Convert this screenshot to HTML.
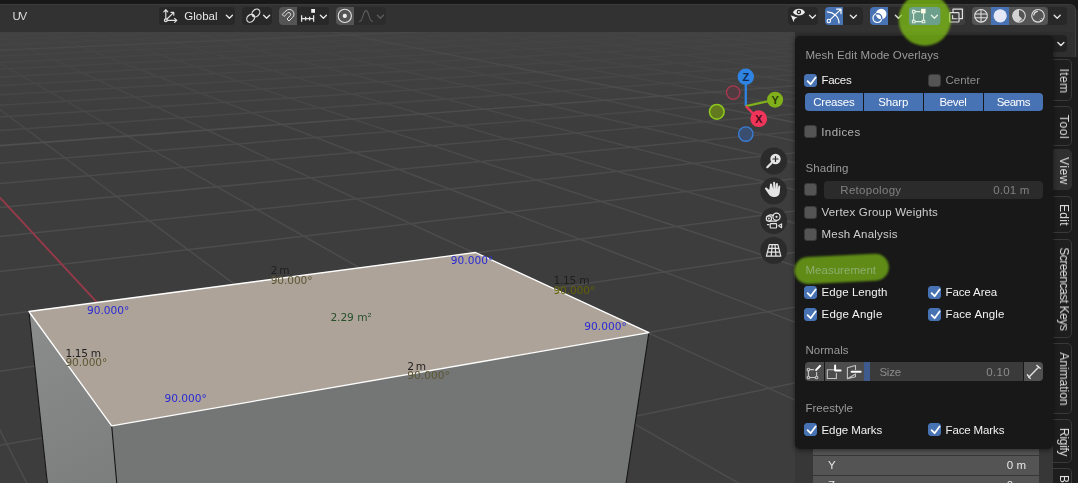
<!DOCTYPE html>
<html><head><meta charset="utf-8"><title>Blender - Mesh Edit Mode Overlays</title>
<style>
*{box-sizing:border-box;margin:0;padding:0}
html,body{width:1078px;height:483px;overflow:hidden;background:#3d3d3d;font-family:"Liberation Sans","DejaVu Sans",sans-serif;font-size:11.5px;color:#e6e6e6}
#root{position:relative;width:1078px;height:483px;overflow:hidden;background:#3d3d3d}
.abs{position:absolute}
#vp{position:absolute;left:0;top:0;width:1078px;height:483px}
#topstrip{position:absolute;left:0;top:0;width:1078px;height:12px;background:#181818}
#header{position:absolute;left:0;top:3.6px;width:1076px;height:28.4px;background:#323232;border-radius:0 6px 0 0;border-top:1px solid #3c3c3c;border-right:1px solid #404040}
.hbtn{position:absolute;top:7px;height:18px;background:#282828;border-radius:4px}
.hbtn.l{background:#545454}
.hbtn.b{background:#4772b3}
.t{position:absolute;white-space:nowrap;line-height:14px;will-change:opacity}
.lab{color:#9a9a9a}
.dim{color:#8c8c8c}
#popup{z-index:3;position:absolute;left:795px;top:36px;width:258px;height:413px;background:#181818;border-radius:5px;box-shadow:0 1px 5px rgba(0,0,0,.55)}
.cb{position:absolute;width:13px;height:13px;border-radius:3px;background:#545454;border:1px solid #3a3a3a}
.cb.on{background:#4772b3;border-color:#4772b3}
.cb.on svg{position:absolute;left:0;top:0}
.seg{position:absolute;background:#4772b3}
.meas{font-family:"DejaVu Sans","Liberation Sans",sans-serif;font-size:10.6px;line-height:11px}
#side{position:absolute;left:1053px;top:32px;width:25px;height:451px;background:#1c1c1c}
.tab{position:absolute;left:0;width:19px;background:#1e1e1e;border-radius:0 5px 5px 0;border:1px solid #393939;border-left:none}
.tab span{position:absolute;left:10.5px;top:50%;white-space:nowrap;transform:translate(-50%,-50%) rotate(90deg);color:#dedede;font-size:12px;line-height:14px;will-change:opacity}
.tab.act{background:#303030;border-color:#303030}
.nav{position:absolute;left:761px;width:26px;height:26px;border-radius:13px;background:#2e2e2e}
</style></head><body><div id="root">
<svg id="vp" width="1078" height="483" viewBox="0 0 1078 483">
<defs><linearGradient id="haze" x1="0" y1="32" x2="0" y2="132" gradientUnits="userSpaceOnUse"><stop offset="0" stop-color="#424242"/><stop offset="1" stop-color="#3d3d3d"/></linearGradient><linearGradient id="gf" x1="0" y1="0" x2="0" y2="483" gradientUnits="userSpaceOnUse"><stop offset="0.066" stop-color="#fff" stop-opacity=".16"/><stop offset="0.16" stop-color="#fff" stop-opacity=".5"/><stop offset="0.30" stop-color="#fff" stop-opacity=".85"/><stop offset="0.5" stop-color="#fff" stop-opacity="1"/></linearGradient>
<linearGradient id="gf2" x1="0" y1="0" x2="0" y2="483" gradientUnits="userSpaceOnUse"><stop offset="0.066" stop-color="#fff" stop-opacity=".45"/><stop offset="0.3" stop-color="#fff" stop-opacity="1"/></linearGradient>
<mask id="gm" maskUnits="userSpaceOnUse" x="0" y="0" width="1078" height="483"><rect x="0" y="0" width="1078" height="483" fill="url(#gf)"/></mask>
<mask id="gm2" maskUnits="userSpaceOnUse" x="0" y="0" width="1078" height="483"><rect x="0" y="0" width="1078" height="483" fill="url(#gf2)"/></mask></defs>
<rect x="0" y="32" width="1078" height="100" fill="url(#haze)"/>
<g mask="url(#gm)">
<path d="M-472.6 -33.7 L-11881.4 2744.0" stroke="#4d4d4d" stroke-width="1.5" fill="none"/>
<path d="M-449.8 -34.1 L-11129.3 2863.0" stroke="#4d4d4d" stroke-width="1.5" fill="none"/>
<path d="M-405.1 -34.7 L-9419.6 3133.5" stroke="#4d4d4d" stroke-width="1.5" fill="none"/>
<path d="M-383.1 -35.0 L-8442.4 3288.1" stroke="#4d4d4d" stroke-width="1.5" fill="none"/>
<path d="M-361.5 -35.3 L-7367.5 3458.2" stroke="#4d4d4d" stroke-width="1.5" fill="none"/>
<path d="M-340.1 -35.6 L-6179.2 3646.3" stroke="#4d4d4d" stroke-width="1.5" fill="none"/>
<path d="M-319.0 -35.9 L-4858.6 3855.2" stroke="#4d4d4d" stroke-width="1.5" fill="none"/>
<path d="M-298.2 -36.2 L-2225.3 2541.2" stroke="#4d4d4d" stroke-width="1.5" fill="none"/>
<path d="M-277.6 -36.4 L-1159.3 2643.3" stroke="#4d4d4d" stroke-width="1.5" fill="none"/>
<path d="M-257.2 -36.7 L-8.0 2753.5" stroke="#4d4d4d" stroke-width="1.5" fill="none"/>
<path d="M-237.2 -37.0 L1239.4 2872.9" stroke="#4d4d4d" stroke-width="1.5" fill="none"/>
<path d="M-197.7 -37.6 L4074.8 3144.3" stroke="#4d4d4d" stroke-width="1.5" fill="none"/>
<path d="M-178.3 -37.8 L3771.9 2206.6" stroke="#4d4d4d" stroke-width="1.5" fill="none"/>
<path d="M-159.2 -38.1 L3605.5 1691.2" stroke="#4d4d4d" stroke-width="1.5" fill="none"/>
<path d="M-140.3 -38.4 L3500.2 1365.2" stroke="#4d4d4d" stroke-width="1.5" fill="none"/>
<path d="M-121.6 -38.6 L3427.6 1140.5" stroke="#4d4d4d" stroke-width="1.5" fill="none"/>
<path d="M-103.1 -38.9 L3374.5 976.1" stroke="#4d4d4d" stroke-width="1.5" fill="none"/>
<path d="M-84.9 -39.1 L3334.0 850.7" stroke="#4d4d4d" stroke-width="1.5" fill="none"/>
<path d="M-66.8 -39.4 L3302.1 751.9" stroke="#4d4d4d" stroke-width="1.5" fill="none"/>
<path d="M-49.0 -39.6 L3276.3 672.0" stroke="#4d4d4d" stroke-width="1.5" fill="none"/>
<path d="M-13.9 -40.1 L3237.1 550.7" stroke="#4d4d4d" stroke-width="1.5" fill="none"/>
<path d="M3.3 -40.4 L3221.9 503.6" stroke="#4d4d4d" stroke-width="1.5" fill="none"/>
<path d="M20.3 -40.6 L3208.8 463.0" stroke="#4d4d4d" stroke-width="1.5" fill="none"/>
<path d="M37.2 -40.8 L3197.3 427.7" stroke="#4d4d4d" stroke-width="1.5" fill="none"/>
<path d="M53.9 -41.1 L3187.3 396.7" stroke="#4d4d4d" stroke-width="1.5" fill="none"/>
<path d="M70.3 -41.3 L3178.5 369.2" stroke="#4d4d4d" stroke-width="1.5" fill="none"/>
<path d="M86.6 -41.5 L3170.5 344.7" stroke="#4d4d4d" stroke-width="1.5" fill="none"/>
<path d="M102.8 -41.7 L3163.4 322.7" stroke="#4d4d4d" stroke-width="1.5" fill="none"/>
<path d="M118.7 -42.0 L3157.0 302.9" stroke="#4d4d4d" stroke-width="1.5" fill="none"/>
<path d="M150.1 -42.4 L3145.9 268.6" stroke="#4d4d4d" stroke-width="1.5" fill="none"/>
<path d="M165.5 -42.6 L3141.1 253.6" stroke="#4d4d4d" stroke-width="1.5" fill="none"/>
<path d="M180.8 -42.8 L3136.7 239.8" stroke="#4d4d4d" stroke-width="1.5" fill="none"/>
<path d="M195.9 -43.0 L3132.6 227.2" stroke="#4d4d4d" stroke-width="1.5" fill="none"/>
<path d="M210.8 -43.2 L3128.8 215.5" stroke="#4d4d4d" stroke-width="1.5" fill="none"/>
<path d="M225.6 -43.4 L3125.3 204.6" stroke="#4d4d4d" stroke-width="1.5" fill="none"/>
<path d="M240.2 -43.6 L3122.0 194.5" stroke="#4d4d4d" stroke-width="1.5" fill="none"/>
<path d="M254.7 -43.8 L3119.0 185.1" stroke="#4d4d4d" stroke-width="1.5" fill="none"/>
<path d="M269.1 -44.0 L3116.2 176.3" stroke="#4d4d4d" stroke-width="1.5" fill="none"/>
<path d="M297.3 -44.4 L3111.0 160.4" stroke="#4d4d4d" stroke-width="1.5" fill="none"/>
<path d="M311.2 -44.6 L3108.7 153.1" stroke="#4d4d4d" stroke-width="1.5" fill="none"/>
<path d="M325.0 -44.8 L3106.4 146.3" stroke="#4d4d4d" stroke-width="1.5" fill="none"/>
<path d="M338.6 -45.0 L3104.4 139.8" stroke="#4d4d4d" stroke-width="1.5" fill="none"/>
<path d="M352.1 -45.2 L3102.4 133.7" stroke="#4d4d4d" stroke-width="1.5" fill="none"/>
<path d="M365.4 -45.4 L3100.5 127.9" stroke="#4d4d4d" stroke-width="1.5" fill="none"/>
<path d="M378.6 -45.6 L3098.8 122.5" stroke="#4d4d4d" stroke-width="1.5" fill="none"/>
<path d="M391.7 -45.7 L3097.1 117.3" stroke="#4d4d4d" stroke-width="1.5" fill="none"/>
<path d="M404.7 -45.9 L3095.5 112.3" stroke="#4d4d4d" stroke-width="1.5" fill="none"/>
<path d="M430.2 -46.3 L3092.5 103.2" stroke="#4d4d4d" stroke-width="1.5" fill="none"/>
<path d="M442.8 -46.5 L3091.1 98.9" stroke="#4d4d4d" stroke-width="1.5" fill="none"/>
<path d="M455.3 -46.6 L3089.8 94.8" stroke="#4d4d4d" stroke-width="1.5" fill="none"/>
<path d="M467.6 -46.8 L3088.6 90.9" stroke="#4d4d4d" stroke-width="1.5" fill="none"/>
<path d="M479.9 -47.0 L3087.4 87.2" stroke="#4d4d4d" stroke-width="1.5" fill="none"/>
<path d="M492.0 -47.1 L3086.2 83.6" stroke="#4d4d4d" stroke-width="1.5" fill="none"/>
<path d="M504.0 -47.3 L3085.1 80.2" stroke="#4d4d4d" stroke-width="1.5" fill="none"/>
<path d="M515.8 -47.5 L3084.0 76.9" stroke="#4d4d4d" stroke-width="1.5" fill="none"/>
<path d="M527.6 -47.6 L3083.0 73.7" stroke="#4d4d4d" stroke-width="1.5" fill="none"/>
<path d="M550.8 -48.0 L3081.1 67.8" stroke="#4d4d4d" stroke-width="1.5" fill="none"/>
<path d="M562.3 -48.1 L3080.2 64.9" stroke="#4d4d4d" stroke-width="1.5" fill="none"/>
<path d="M573.6 -48.3 L3079.3 62.2" stroke="#4d4d4d" stroke-width="1.5" fill="none"/>
<path d="M584.9 -48.4 L3078.5 59.6" stroke="#4d4d4d" stroke-width="1.5" fill="none"/>
<path d="M596.0 -48.6 L3077.7 57.1" stroke="#4d4d4d" stroke-width="1.5" fill="none"/>
<path d="M607.0 -48.7 L3076.9 54.7" stroke="#4d4d4d" stroke-width="1.5" fill="none"/>
<path d="M618.0 -48.9 L3076.1 52.3" stroke="#4d4d4d" stroke-width="1.5" fill="none"/>
<path d="M628.8 -49.0 L3075.4 50.1" stroke="#4d4d4d" stroke-width="1.5" fill="none"/>
<path d="M639.6 -49.2 L3074.7 47.9" stroke="#4d4d4d" stroke-width="1.5" fill="none"/>
<path d="M-472.6 -33.7 L644.9 -49.3" stroke="#4d4d4d" stroke-width="1.5" fill="none"/>
<path d="M-475.7 -33.0 L654.0 -48.9" stroke="#4d4d4d" stroke-width="1.5" fill="none"/>
<path d="M-478.9 -32.2 L663.2 -48.5" stroke="#4d4d4d" stroke-width="1.5" fill="none"/>
<path d="M-482.2 -31.4 L672.7 -48.2" stroke="#4d4d4d" stroke-width="1.5" fill="none"/>
<path d="M-485.6 -30.6 L682.3 -47.8" stroke="#4d4d4d" stroke-width="1.5" fill="none"/>
<path d="M-489.1 -29.7 L692.1 -47.4" stroke="#4d4d4d" stroke-width="1.5" fill="none"/>
<path d="M-492.8 -28.8 L702.2 -47.0" stroke="#4d4d4d" stroke-width="1.5" fill="none"/>
<path d="M-496.5 -27.9 L712.4 -46.6" stroke="#4d4d4d" stroke-width="1.5" fill="none"/>
<path d="M-500.4 -27.0 L722.9 -46.2" stroke="#4d4d4d" stroke-width="1.5" fill="none"/>
<path d="M-508.5 -25.0 L744.6 -45.3" stroke="#4d4d4d" stroke-width="1.5" fill="none"/>
<path d="M-512.8 -24.0 L755.8 -44.9" stroke="#4d4d4d" stroke-width="1.5" fill="none"/>
<path d="M-517.2 -22.9 L767.2 -44.4" stroke="#4d4d4d" stroke-width="1.5" fill="none"/>
<path d="M-521.8 -21.8 L778.9 -44.0" stroke="#4d4d4d" stroke-width="1.5" fill="none"/>
<path d="M-526.5 -20.6 L790.9 -43.5" stroke="#4d4d4d" stroke-width="1.5" fill="none"/>
<path d="M-531.5 -19.4 L803.1 -43.0" stroke="#4d4d4d" stroke-width="1.5" fill="none"/>
<path d="M-536.6 -18.2 L815.7 -42.5" stroke="#4d4d4d" stroke-width="1.5" fill="none"/>
<path d="M-541.9 -16.9 L828.5 -42.0" stroke="#4d4d4d" stroke-width="1.5" fill="none"/>
<path d="M-547.4 -15.5 L841.7 -41.5" stroke="#4d4d4d" stroke-width="1.5" fill="none"/>
<path d="M-559.2 -12.7 L868.9 -40.4" stroke="#4d4d4d" stroke-width="1.5" fill="none"/>
<path d="M-565.4 -11.1 L883.1 -39.8" stroke="#4d4d4d" stroke-width="1.5" fill="none"/>
<path d="M-571.9 -9.6 L897.6 -39.3" stroke="#4d4d4d" stroke-width="1.5" fill="none"/>
<path d="M-578.7 -7.9 L912.4 -38.7" stroke="#4d4d4d" stroke-width="1.5" fill="none"/>
<path d="M-585.8 -6.2 L927.7 -38.1" stroke="#4d4d4d" stroke-width="1.5" fill="none"/>
<path d="M-593.2 -4.4 L943.4 -37.5" stroke="#4d4d4d" stroke-width="1.5" fill="none"/>
<path d="M-600.9 -2.5 L959.4 -36.8" stroke="#4d4d4d" stroke-width="1.5" fill="none"/>
<path d="M-609.1 -0.5 L976.0 -36.2" stroke="#4d4d4d" stroke-width="1.5" fill="none"/>
<path d="M-617.6 1.6 L992.9 -35.5" stroke="#4d4d4d" stroke-width="1.5" fill="none"/>
<path d="M-636.0 6.0 L1028.3 -34.1" stroke="#4d4d4d" stroke-width="1.5" fill="none"/>
<path d="M-645.9 8.5 L1046.8 -33.4" stroke="#4d4d4d" stroke-width="1.5" fill="none"/>
<path d="M-656.3 11.0 L1065.7 -32.6" stroke="#4d4d4d" stroke-width="1.5" fill="none"/>
<path d="M-667.4 13.7 L1085.3 -31.9" stroke="#4d4d4d" stroke-width="1.5" fill="none"/>
<path d="M-679.1 16.5 L1105.4 -31.1" stroke="#4d4d4d" stroke-width="1.5" fill="none"/>
<path d="M-691.4 19.5 L1126.1 -30.2" stroke="#4d4d4d" stroke-width="1.5" fill="none"/>
<path d="M-704.5 22.7 L1147.5 -29.4" stroke="#4d4d4d" stroke-width="1.5" fill="none"/>
<path d="M-718.5 26.1 L1169.6 -28.5" stroke="#4d4d4d" stroke-width="1.5" fill="none"/>
<path d="M-733.4 29.8 L1192.3 -27.6" stroke="#4d4d4d" stroke-width="1.5" fill="none"/>
<path d="M-766.2 37.7 L1240.0 -25.7" stroke="#4d4d4d" stroke-width="1.5" fill="none"/>
<path d="M-784.4 42.2 L1265.1 -24.7" stroke="#4d4d4d" stroke-width="1.5" fill="none"/>
<path d="M-803.9 46.9 L1291.0 -23.7" stroke="#4d4d4d" stroke-width="1.5" fill="none"/>
<path d="M-825.0 52.1 L1317.8 -22.7" stroke="#4d4d4d" stroke-width="1.5" fill="none"/>
<path d="M-847.7 57.6 L1345.5 -21.6" stroke="#4d4d4d" stroke-width="1.5" fill="none"/>
<path d="M-872.4 63.6 L1374.3 -20.4" stroke="#4d4d4d" stroke-width="1.5" fill="none"/>
<path d="M-899.3 70.2 L1404.1 -19.2" stroke="#4d4d4d" stroke-width="1.5" fill="none"/>
<path d="M-928.6 77.3 L1435.0 -18.0" stroke="#4d4d4d" stroke-width="1.5" fill="none"/>
<path d="M-960.8 85.1 L1467.0 -16.8" stroke="#4d4d4d" stroke-width="1.5" fill="none"/>
<path d="M-1035.3 103.3 L1534.9 -14.1" stroke="#4d4d4d" stroke-width="1.5" fill="none"/>
<path d="M-1078.9 113.9 L1570.9 -12.6" stroke="#4d4d4d" stroke-width="1.5" fill="none"/>
<path d="M-1127.7 125.8 L1608.3 -11.2" stroke="#4d4d4d" stroke-width="1.5" fill="none"/>
<path d="M-1182.7 139.2 L1647.4 -9.6" stroke="#4d4d4d" stroke-width="1.5" fill="none"/>
<path d="M-1245.2 154.4 L1688.0 -8.0" stroke="#4d4d4d" stroke-width="1.5" fill="none"/>
<path d="M-1316.7 171.8 L1730.5 -6.3" stroke="#4d4d4d" stroke-width="1.5" fill="none"/>
<path d="M-1399.5 191.9 L1774.8 -4.6" stroke="#4d4d4d" stroke-width="1.5" fill="none"/>
<path d="M-1496.4 215.5 L1821.2 -2.7" stroke="#4d4d4d" stroke-width="1.5" fill="none"/>
<path d="M-1611.3 243.5 L1869.7 -0.8" stroke="#4d4d4d" stroke-width="1.5" fill="none"/>
<path d="M-1919.8 318.6 L1973.9 3.3" stroke="#4d4d4d" stroke-width="1.5" fill="none"/>
<path d="M-2133.8 370.7 L2029.9 5.5" stroke="#4d4d4d" stroke-width="1.5" fill="none"/>
<path d="M-2411.3 438.3 L2088.7 7.8" stroke="#4d4d4d" stroke-width="1.5" fill="none"/>
<path d="M-2785.2 529.3 L2150.7 10.3" stroke="#4d4d4d" stroke-width="1.5" fill="none"/>
<path d="M-3316.7 658.7 L2216.0 12.9" stroke="#4d4d4d" stroke-width="1.5" fill="none"/>
<path d="M-4131.7 857.2 L2285.0 15.6" stroke="#4d4d4d" stroke-width="1.5" fill="none"/>
<path d="M-5539.8 1200.0 L2357.9 18.5" stroke="#4d4d4d" stroke-width="1.5" fill="none"/>
<path d="M-8558.6 1935.0 L2435.1 21.5" stroke="#4d4d4d" stroke-width="1.5" fill="none"/>
<path d="M-14402.5 3543.8 L2517.1 24.8" stroke="#4d4d4d" stroke-width="1.5" fill="none"/>
<path d="M-7367.5 3458.2 L2696.8 31.9" stroke="#4d4d4d" stroke-width="1.5" fill="none"/>
<path d="M-4858.6 3855.2 L2795.6 35.8" stroke="#4d4d4d" stroke-width="1.5" fill="none"/>
<path d="M-676.4 3376.9 L2901.3 40.0" stroke="#4d4d4d" stroke-width="1.5" fill="none"/>
<path d="M2488.9 3754.3 L3014.6 44.4" stroke="#4d4d4d" stroke-width="1.5" fill="none"/>
</g>
<g mask="url(#gm2)">
<path d="M-427.3 -34.4 L-10311.6 2992.4" stroke="#4f4f4f" stroke-width="1.5" fill="none"/>
<path d="M-217.3 -37.3 L2595.4 3002.7" stroke="#963a49" stroke-width="1.9" fill="none"/>
<path d="M-31.4 -39.9 L3255.0 606.0" stroke="#4f4f4f" stroke-width="1.5" fill="none"/>
<path d="M134.5 -42.2 L3151.2 284.9" stroke="#4f4f4f" stroke-width="1.5" fill="none"/>
<path d="M283.3 -44.2 L3113.5 168.1" stroke="#4f4f4f" stroke-width="1.5" fill="none"/>
<path d="M417.5 -46.1 L3094.0 107.6" stroke="#4f4f4f" stroke-width="1.5" fill="none"/>
<path d="M539.3 -47.8 L3082.0 70.7" stroke="#4f4f4f" stroke-width="1.5" fill="none"/>
<path d="M-469.6 -34.5 L636.0 -49.6" stroke="#4f4f4f" stroke-width="1.5" fill="none"/>
<path d="M-504.4 -26.0 L733.6 -45.8" stroke="#4f4f4f" stroke-width="1.5" fill="none"/>
<path d="M-553.2 -14.1 L855.1 -41.0" stroke="#4f4f4f" stroke-width="1.5" fill="none"/>
<path d="M-626.5 3.7 L1010.4 -34.8" stroke="#4f4f4f" stroke-width="1.5" fill="none"/>
<path d="M-749.2 33.6 L1215.8 -26.7" stroke="#4f4f4f" stroke-width="1.5" fill="none"/>
<path d="M-996.2 93.7 L1500.3 -15.4" stroke="#4f4f4f" stroke-width="1.5" fill="none"/>
<path d="M-1749.7 277.2 L1920.6 1.2" stroke="#4f4f4f" stroke-width="1.5" fill="none"/>
<path d="M-12627.1 3961.9 L2604.1 28.2" stroke="#4f4f4f" stroke-width="1.5" fill="none"/>
</g>
<!-- box -->
<linearGradient id="lf" x1="29" y1="311" x2="116" y2="483" gradientUnits="userSpaceOnUse"><stop offset="0" stop-color="#8c8e8d"/><stop offset="1" stop-color="#7c7e7d"/></linearGradient>
<polygon points="28.9,311.5 111.7,425.8 116.7,483 47.2,483" fill="url(#lf)"/>
<polygon points="111.7,425.8 648.9,332.7 626,483 116.7,483" fill="#737675"/>
<polygon points="28.9,311.5 475.5,252.5 648.9,332.7 111.7,425.8" fill="#ada399"/>
<path d="M28.9 311.5 L47.4 483.5 M111.7 425.8 L116.8 483.5 M648.9 332.7 L626 483.5" stroke="#161616" stroke-width="1.1" fill="none"/>
<polygon points="28.9,311.5 475.5,252.5 648.9,332.7 111.7,425.8" fill="none" stroke="#ffffff" stroke-width="1.3" stroke-linejoin="round"/>
</svg>

<!-- measurement texts -->
<div class="t meas" style="left:86.9px;top:304.6px;color:#2a2ad4;letter-spacing:0.004px">90.000°</div>
<div class="t meas" style="left:450.8px;top:255.4px;color:#2a2ad4;letter-spacing:0.004px">90.000°</div>
<div class="t meas" style="left:584.3px;top:321.3px;color:#2a2ad4;letter-spacing:0.004px">90.000°</div>
<div class="t meas" style="left:164.4px;top:392.5px;color:#2a2ad4;letter-spacing:0.004px">90.000°</div>
<div class="t meas" style="left:270.7px;top:265.3px;color:#1f1f1f;letter-spacing:-0.819px">2 m</div>
<div class="t meas" style="left:270.7px;top:275.3px;color:#5e5733;letter-spacing:-0.079px">90.000°</div>
<div class="t meas" style="left:553.4px;top:274.7px;color:#1f1f1f;letter-spacing:-0.236px">1.15 m</div>
<div class="t meas" style="left:553.4px;top:284.7px;color:#626000;letter-spacing:-0.079px">90.000°</div>
<div class="t meas" style="left:65.4px;top:348.0px;color:#1f1f1f;letter-spacing:-0.336px">1.15 m</div>
<div class="t meas" style="left:65.4px;top:357.4px;color:#5e5733;letter-spacing:-0.079px">90.000°</div>
<div class="t meas" style="left:407.3px;top:360.6px;color:#1f1f1f;letter-spacing:-0.769px">2 m</div>
<div class="t meas" style="left:407.3px;top:370.0px;color:#5e5733;letter-spacing:0.004px">90.000°</div>
<div class="t meas" style="left:330.4px;top:312.4px;color:#27512c;letter-spacing:-0.039px">2.29 m²</div>

<!-- gizmo -->
<svg class="abs" style="left:700px;top:60px" width="100" height="100" viewBox="700 60 100 100">
<circle cx="733.2" cy="92.6" r="6.7" fill="#503b41" stroke="#a83850" stroke-width="1.4"/>
<circle cx="716.8" cy="111.8" r="7.3" fill="#63791f" stroke="#8cc61c" stroke-width="1.6"/>
<circle cx="745.8" cy="134.1" r="7.2" fill="#3a4e70" stroke="#3a7dd6" stroke-width="1.4"/>
<path d="M745.8 106.2 L745.8 84" stroke="#2f84e3" stroke-width="2.3"/>
<path d="M745.8 106.2 L769 101" stroke="#80b11b" stroke-width="2.3"/>
<path d="M745.8 106.2 L754 114.4" stroke="#f0355b" stroke-width="2.3"/>
<circle cx="745.8" cy="76.8" r="8.2" fill="#2f84e3"/>
<circle cx="775.1" cy="99.7" r="8" fill="#80b11b"/>
<circle cx="758.7" cy="118.7" r="8.4" fill="#f0355b"/>
<text x="745.8" y="80.8" font-size="11" font-weight="bold" text-anchor="middle" fill="#0e2a50" font-family="Liberation Sans, sans-serif">Z</text>
<text x="775.1" y="103.7" font-size="11" font-weight="bold" text-anchor="middle" fill="#2a3c08" font-family="Liberation Sans, sans-serif">Y</text>
<text x="758.7" y="122.7" font-size="11" font-weight="bold" text-anchor="middle" fill="#4a0c1a" font-family="Liberation Sans, sans-serif">X</text>
</svg>

<!-- nav buttons -->
<svg class="abs" style="left:758px;top:146px" width="32" height="120" viewBox="758 146 32 120" fill="none" stroke="#e4e4e4" stroke-width="1.4" stroke-linecap="round" stroke-linejoin="round">
<g fill="#2b2b2b" stroke="none"><circle cx="773.7" cy="161" r="13.4"/><circle cx="773.7" cy="191" r="13.4"/><circle cx="773.7" cy="220.6" r="13.4"/><circle cx="773.7" cy="250.4" r="13.4"/></g>
<!-- zoom -->
<circle cx="775.5" cy="159" r="5.2" fill="#e4e4e4" stroke="none"/>
<path d="M771.5 163 L767.3 167.2" stroke-width="2.2"/>
<path d="M773 159 H778 M775.5 156.5 V161.5" stroke="#2b2b2b" stroke-width="1.2"/>
<!-- hand -->
<path d="M769.2 190 l-2.4 -2.2 c-1.2 -.9 -2.3 .4 -1.5 1.5 l3.6 5.2 c1.2 1.6 2.6 2.4 4.8 2.4 h1.3 c3 0 4.6 -2 4.8 -4.8 l.4 -5.6 c0 -1.2 -1.7 -1.3 -1.9 -.1 l-.5 3.2 l.1 -5.6 c0 -1.3 -1.9 -1.3 -2 0 l-.3 5 l-.5 -6.3 c-.1 -1.3 -2 -1.2 -2 .1 l.2 6.4 l-1.4 -5 c-.4 -1.2 -2.1 -.7 -1.9 .5 z" fill="#e4e4e4" stroke="none"/>
<!-- camera -->
<circle cx="768.9" cy="218.5" r="2.6" stroke-width="1.2"/><circle cx="776.5" cy="216.8" r="3.6" stroke-width="1.2"/>
<path d="M768.9 221.1 H776.5 M768 215.9 C769.5 214.6 771.6 214.6 773.2 215.4" stroke-width="1.2"/>
<circle cx="768.9" cy="218.5" r=".9" fill="#e4e4e4" stroke="none"/><circle cx="776.5" cy="216.8" r="1.1" fill="#e4e4e4" stroke="none"/>
<rect x="770.2" y="223.6" width="6.4" height="4.4" rx=".8" stroke-width="1.2"/>
<path d="M767.4 224.6 h1.6 M778.6 225.8 l3 -1.9 v3.8 z" stroke-width="1.1"/>
<!-- grid -->
<path d="M769.3 244.6 h8.6 l2.9 11.6 h-14.4 z M768.3 248.3 h10.6 M767.3 252.2 h12.6 M772.2 244.6 l-1 11.6 M775 244.6 l1 11.6" stroke-width="1.2"/>
</svg>

<div id="topstrip"></div>
<div id="header"></div>
<div class="t" style="left:12.4px;top:8.9px;font-size:11.5px;color:#dcdcdc;letter-spacing:-1.084px">UV</div>

<div class="hbtn" style="left:159px;width:76px"></div>
<div class="t" style="left:184.2px;top:8.6px;font-size:11.5px;color:#e6e6e6;letter-spacing:0.030px">Global</div>
<div class="hbtn" style="left:242px;width:30px"></div>
<div class="hbtn" style="left:279px;width:50px"></div>
<div class="hbtn l" style="left:279px;width:18px;border-radius:4px 0 0 4px"></div>
<div class="hbtn" style="left:336px;width:50px;background:#2c2c2c"></div>
<div class="hbtn l" style="left:336px;width:18px;border-radius:4px 0 0 4px"></div>

<div class="hbtn" style="left:788px;width:30px"></div>
<div class="hbtn" style="left:825px;width:38px"></div>
<div class="hbtn b" style="left:825px;width:18px;border-radius:4px 0 0 4px"></div>
<div class="hbtn" style="left:870px;width:38px"></div>
<div class="hbtn b" style="left:870px;width:18px;border-radius:4px 0 0 4px"></div>
<div class="hbtn" style="left:947.6px;width:17.6px;background:#3e3e3e"></div>
<div class="hbtn l" style="left:972px;width:76px"></div>
<div class="hbtn b" style="left:991px;width:18px;border-radius:0"></div>
<div class="hbtn" style="left:1048px;width:19px;border-radius:0 4px 4px 0"></div>

<!-- second row (behind popup) -->
<div class="abs" style="left:795px;top:32px;width:281px;height:25px;background:#2f2f2f;border-right:1px solid #404040;z-index:2"></div>
<div class="abs" style="left:1076px;top:10px;width:2px;height:47px;background:#242424;z-index:2"></div>
<div class="abs" style="left:900px;top:34.5px;width:167px;height:17px;background:#222222;border-radius:4px;z-index:2"></div>

<svg class="abs" style="left:0;top:0;z-index:2" width="1078" height="50" viewBox="0 0 1078 50" fill="none" stroke="#e2e2e2" stroke-width="1.2" stroke-linecap="round" stroke-linejoin="round">
<!-- orientation -->
<circle cx="165.8" cy="20.2" r="1.4"/>
<path d="M165.8 18.6 V9.8 M163.8 11.8 l2 -2.2 l2 2.2 M167.4 20.4 H176.6 M174.6 18.4 l2.2 2 l-2.2 2 M167 19 L173.6 12.6 M171 12.4 h2.8 v2.8" stroke-width="1.1"/>
<!-- chevrons -->
<g stroke-width="1.4">
<path d="M226.4 15.2 l3 3 l3 -3"/>
<path d="M263.6 15.2 l3 3 l3 -3"/>
<path d="M320.4 15.2 l3 3 l3 -3"/>
<path d="M377.4 15.2 l3 3 l3 -3" stroke="#5c5c5c"/>
<path d="M809.5 15.2 l3 3 l3 -3"/>
<path d="M850.4 15.2 l3 3 l3 -3"/>
<path d="M895.4 15.2 l3 3 l3 -3"/>
<path d="M1054.2 15.2 l3 3 l3 -3"/>
<path d="M1057.9 42.4 l3 3 l3 -3"/>
</g>
<!-- link -->
<ellipse cx="250.7" cy="18.2" rx="4.4" ry="3.4" transform="rotate(-45 250.7 18.2)"/><ellipse cx="255.9" cy="13" rx="4.4" ry="3.4" transform="rotate(-45 255.9 13)"/><circle cx="253.3" cy="15.6" r="1.2" fill="#e2e2e2" stroke="none"/>
<!-- magnet -->
<path d="M282.4 14.2 l3.6 -3.4 a4.6 4.6 0 0 1 6.6 6.6 l-3.6 3.6 l-2 -2 l3.4 -3.6 a1.9 1.9 0 0 0 -2.6 -2.6 l-3.4 3.4 z" stroke-width="1"/>
<!-- snap increment -->
<path d="M301.6 18.6 H313.6 M301.6 15.2 V21.8 M313.6 15.2 V21.8 M305.6 16.8 V20.4 M309.6 16.8 V20.4" stroke-width="1.3" stroke-linecap="butt"/>
<rect x="311.2" y="9" width="3.8" height="3.8" fill="#f0f0f0" stroke="none"/>
<!-- proportional -->
<circle cx="344.8" cy="15.9" r="6.6" stroke-width="1.1"/><circle cx="344.8" cy="15.9" r="2.1" fill="#f0f0f0" stroke="none"/>
<path d="M359.6 21.4 c3.6 0 3.4 -10.8 6.4 -10.8 s2.8 10.8 6.4 10.8" stroke="#5c5c5c" stroke-width="1.1"/>
<!-- visibility: eye + cursor -->
<path d="M792.8 12.2 c2.8 -4.6 9.6 -4.6 12.2 0 c-2.6 4.4 -9.4 4.4 -12.2 0 z" fill="#ececec" stroke="none"/>
<circle cx="798.9" cy="12" r="2.3" fill="#282828" stroke="none"/><circle cx="798.9" cy="12" r="1" fill="#ececec" stroke="none"/>
<path d="M790.2 14.6 l8.2 3 l-3.4 1.5 l-1.3 3.7 z" fill="#ececec" stroke="#282828" stroke-width=".9"/>
<!-- gizmo -->
<circle cx="828.8" cy="21" r="1.7" stroke="#fff" stroke-width="1.1"/>
<path d="M830.2 19.6 L840.8 9.4 M836.6 9.2 h4.4 v4.4 M827.4 11.8 c6.4 .4 11.4 4.6 11.6 11.2" stroke="#fff" stroke-width="1.2"/>
<!-- overlay -->
<clipPath id="ovc"><circle cx="881.2" cy="14" r="5.3"/></clipPath>
<circle cx="877.4" cy="18.1" r="4.4" stroke="#fff" stroke-width="1.2"/>
<circle cx="881.2" cy="14" r="5.3" fill="#fff" stroke="none"/>
<circle cx="877.4" cy="18.1" r="4.4" stroke="#4772b3" stroke-width="1.4" clip-path="url(#ovc)"/>
<!-- xray -->
<rect x="949.6" y="12.6" width="9.4" height="9.4" rx=".8" stroke-width="1.2"/>
<path d="M953 12.4 V9.2 h9.4 v9.4 H959.4" stroke-width="1.2"/>
<path d="M952.6 15.6 v3.2 h3.4 M957 18.8 h.2" stroke-width="1.1"/>
<!-- shading -->
<circle cx="981" cy="15.8" r="6.3" stroke-width="1.1"/><path d="M974.8 14 H987.2 M974.8 17.8 H987.2 M981 9.6 V22" stroke-width="1"/>
<circle cx="1000.2" cy="15.8" r="6.6" fill="#e4e8f6" stroke="none"/>
<circle cx="1019" cy="15.8" r="6.3" stroke-width="1.1"/><path d="M1019 15.8 V9.5 A6.3 6.3 0 1 0 1023.45 20.25 Z" fill="#d2d2d2" stroke="none"/><path d="M1021.6 20.8 l1.2 -1.2 M1019.6 21.6 l2 -2" stroke="#555" stroke-width=".8"/>
<circle cx="1038" cy="15.8" r="6.3" stroke-width="1.1"/><path d="M1033.8 15 a4.4 4.4 0 0 1 3.6 -3.6" stroke-width="1.2"/><path d="M1040 20 l1 1 M1041.6 18.4 l1 1" stroke-width=".9"/>
</svg>

<!-- N panel bottom -->
<div class="abs" style="left:795px;top:440px;width:258px;height:43px;background:#373737"></div>
<div class="abs" style="left:813px;top:440px;width:226px;height:15px;background:#545454"></div>
<div class="abs" style="left:813px;top:456px;width:226px;height:19px;background:#545454"></div>
<div class="abs" style="left:813px;top:476px;width:226px;height:19px;background:#545454"></div>
<div class="t" style="left:828px;top:458px;color:#e6e6e6">Y</div>
<div class="t" style="left:980px;top:458px;width:46px;text-align:right;color:#e6e6e6">0 m</div>
<div class="t" style="left:828px;top:478px;color:#e6e6e6">Z</div>
<div class="t" style="left:980px;top:478px;width:46px;text-align:right;color:#e6e6e6">0 m</div>

<!-- sidebar tabs -->
<div id="side">
<div class="tab" style="top:27.0px;height:42.0px"><span style="top:21.0px;letter-spacing:0.385px">Item</span></div>
<div class="tab" style="top:73.6px;height:40.4px"><span style="top:20.7px;letter-spacing:0.628px">Tool</span></div>
<div class="tab act" style="top:117.3px;height:41.0px"><span style="top:21.1px;letter-spacing:0.468px">View</span></div>
<div class="tab" style="top:164.0px;height:37.0px"><span style="top:18.2px;letter-spacing:0.304px">Edit</span></div>
<div class="tab" style="top:206.8px;height:99.2px"><span style="top:49.0px;letter-spacing:-0.460px">Screencast Keys</span></div>
<div class="tab" style="top:311.0px;height:70.6px"><span style="top:35.4px;letter-spacing:-0.009px">Animation</span></div>
<div class="tab" style="top:386.5px;height:44.5px"><span style="top:22.7px;letter-spacing:-0.283px">Rigify</span></div>
<div class="tab" style="top:436px;height:68.5px"><span style="top:9.7px">B</span></div>
</div>

<!-- popup -->
<div id="popup">
<div class="t lab" style="top:12.3px;left:10.4px;letter-spacing:0.079px">Mesh Edit Mode Overlays</div>
<div class="cb on" style="left:9.4px;top:37.8px"><svg width="13" height="13" viewBox="0 0 13 13"><path d="M2.6 6.1 L5.6 9.2 L10.6 2.5" fill="none" stroke="#fff" stroke-width="1.8" stroke-linecap="round" stroke-linejoin="round"/></svg></div><div class="t" style="top:36.9px;left:26.5px;color:#f2f2f2;letter-spacing:-0.282px">Faces</div>
<div class="cb" style="left:133.4px;top:37.8px"></div><div class="t dim" style="top:36.9px;left:150.5px;letter-spacing:-0.006px">Center</div>
<div class="seg" style="left:9.6px;width:58.4px;top:56.6px;height:18.8px;border-radius:4px 0 0 4px"></div>
<div class="t" style="top:59.4px;left:38.9px;transform:translateX(-50%);color:#ffffff;letter-spacing:-0.221px">Creases</div>
<div class="seg" style="left:69.0px;width:59.0px;top:56.6px;height:18.8px;border-radius:0"></div>
<div class="t" style="top:59.4px;left:98.3px;transform:translateX(-50%);color:#ffffff;letter-spacing:-0.122px">Sharp</div>
<div class="seg" style="left:129.0px;width:59.0px;top:56.6px;height:18.8px;border-radius:0"></div>
<div class="t" style="top:59.4px;left:158.0px;transform:translateX(-50%);color:#ffffff;letter-spacing:-0.320px">Bevel</div>
<div class="seg" style="left:189.0px;width:59.4px;top:56.6px;height:18.8px;border-radius:0 4px 4px 0"></div>
<div class="t" style="top:59.4px;left:218.3px;transform:translateX(-50%);color:#ffffff;letter-spacing:-0.499px">Seams</div>
<div class="cb" style="left:9.4px;top:88.9px"></div><div class="t" style="top:88.7px;left:26.2px;color:#b2b2b2;letter-spacing:0.427px">Indices</div>
<div class="t lab" style="top:125.2px;left:10.4px;letter-spacing:0.130px">Shading</div>
<div class="cb" style="left:9.4px;top:147.3px"></div>
<div class="abs" style="left:29.4px;top:144.6px;width:219px;height:18.8px;background:#2b2b2b;border-radius:4px"></div>
<div class="t" style="top:147.1px;left:45.3px;color:#808080;letter-spacing:0.290px">Retopology</div>
<div class="t" style="top:147.1px;right:23.6px;color:#808080;letter-spacing:0.166px">0.01 m</div>
<div class="cb" style="left:9.4px;top:169.5px"></div><div class="t" style="top:168.7px;left:26.5px;color:#cdcdcd;letter-spacing:0.211px">Vertex Group Weights</div>
<div class="cb" style="left:9.4px;top:191.7px"></div><div class="t" style="top:190.9px;left:26.5px;color:#cdcdcd;letter-spacing:0.207px">Mesh Analysis</div>
<div class="cb on" style="left:9.4px;top:249.9px"><svg width="13" height="13" viewBox="0 0 13 13"><path d="M2.6 6.1 L5.6 9.2 L10.6 2.5" fill="none" stroke="#fff" stroke-width="1.8" stroke-linecap="round" stroke-linejoin="round"/></svg></div><div class="t" style="top:249.2px;left:26.5px;color:#f2f2f2;letter-spacing:0.067px">Edge Length</div>
<div class="cb on" style="left:133.4px;top:249.9px"><svg width="13" height="13" viewBox="0 0 13 13"><path d="M2.6 6.1 L5.6 9.2 L10.6 2.5" fill="none" stroke="#fff" stroke-width="1.8" stroke-linecap="round" stroke-linejoin="round"/></svg></div><div class="t" style="top:249.2px;left:150.5px;color:#f2f2f2;letter-spacing:-0.103px">Face Area</div>
<div class="cb on" style="left:9.4px;top:271.7px"><svg width="13" height="13" viewBox="0 0 13 13"><path d="M2.6 6.1 L5.6 9.2 L10.6 2.5" fill="none" stroke="#fff" stroke-width="1.8" stroke-linecap="round" stroke-linejoin="round"/></svg></div><div class="t" style="top:271.0px;left:26.5px;color:#f2f2f2;letter-spacing:0.217px">Edge Angle</div>
<div class="cb on" style="left:133.4px;top:271.7px"><svg width="13" height="13" viewBox="0 0 13 13"><path d="M2.6 6.1 L5.6 9.2 L10.6 2.5" fill="none" stroke="#fff" stroke-width="1.8" stroke-linecap="round" stroke-linejoin="round"/></svg></div><div class="t" style="top:271.0px;left:150.5px;color:#f2f2f2;letter-spacing:0.150px">Face Angle</div>
<div class="t lab" style="top:307.1px;left:10.4px;letter-spacing:0.048px">Normals</div>
<div class="abs" style="left:9.6px;top:326.2px;width:19.4px;height:19.3px;background:#4c4c4c;border-radius:4px 0 0 4px"></div>
<div class="abs" style="left:29.5px;top:326.2px;width:19.3px;height:19.3px;background:#4c4c4c"></div>
<div class="abs" style="left:49.3px;top:326.2px;width:19.4px;height:19.3px;background:#4c4c4c"></div>
<div class="abs" style="left:69.2px;top:326.2px;width:159.2px;height:19.3px;background:#3a3a3a"></div>
<div class="abs" style="left:69.2px;top:326.2px;width:5.6px;height:19.3px;background:#3f5b8d"></div>
<div class="abs" style="left:229.1px;top:326.2px;width:19.3px;height:19.3px;background:#505050;border-radius:0 4px 4px 0"></div>
<svg class="abs" style="left:9px;top:326px" width="240" height="20" viewBox="804 362 240 20" fill="none" stroke="#c4c4c4" stroke-width="1.1" stroke-linecap="round" stroke-linejoin="round">
<circle cx="808.4" cy="369.6" r="1.3"/><circle cx="808.4" cy="377.5" r="1.3"/><circle cx="816.6" cy="377.5" r="1.3"/><path d="M808.4 371 V376.1 M809.8 377.5 H815.2 M816.6 376.1 V372.4 M809.8 369.6 H813.6"/><path d="M816.2 369.9 L820 365.9" stroke="#fff" stroke-width="2.1"/>
<path d="M833.8 369.7 H827.3 V378.5 H836.4 V373.2"/><path d="M835.1 365.6 V370.6 H840.6" stroke="#fff" stroke-width="2"/>
<path d="M847.4 367.7 L855.5 365.5 V369.6 M855.5 374 V376.8 L847.4 378.8 Z M847.4 367.7 V378.8"/><path d="M851.6 371.8 H860.6" stroke="#fff" stroke-width="2"/>
<path d="M1028.8 377.2 L1038.8 367 M1027.4 374.8 l2.8 3.6 M1036.8 365.4 l3.4 2.8" stroke="#e0e0e0" stroke-width="1.4"/>
</svg>
<div class="t" style="top:328.6px;left:84.4px;color:#8c8c8c;letter-spacing:-0.225px">Size</div>
<div class="t" style="top:328.6px;left:191.3px;color:#8c8c8c;letter-spacing:0.336px">0.10</div>
<div class="t lab" style="top:364.7px;left:10.4px;letter-spacing:0.025px">Freestyle</div>
<div class="cb on" style="left:9.4px;top:387.3px"><svg width="13" height="13" viewBox="0 0 13 13"><path d="M2.6 6.1 L5.6 9.2 L10.6 2.5" fill="none" stroke="#fff" stroke-width="1.8" stroke-linecap="round" stroke-linejoin="round"/></svg></div><div class="t" style="top:386.6px;left:26.5px;color:#f2f2f2;letter-spacing:-0.062px">Edge Marks</div>
<div class="cb on" style="left:133.4px;top:387.3px"><svg width="13" height="13" viewBox="0 0 13 13"><path d="M2.6 6.1 L5.6 9.2 L10.6 2.5" fill="none" stroke="#fff" stroke-width="1.8" stroke-linecap="round" stroke-linejoin="round"/></svg></div><div class="t" style="top:386.6px;left:150.5px;color:#f2f2f2;letter-spacing:-0.131px">Face Marks</div>
</div>

<!-- green highlights -->
<svg class="abs" style="left:780px;top:0;z-index:4" width="298" height="300" viewBox="780 0 298 300">
<defs><filter id="bl" filterUnits="userSpaceOnUse" x="780" y="-40" width="298" height="340"><feGaussianBlur stdDeviation="0.9"/></filter></defs>
<circle cx="924.8" cy="19.6" r="26.2" fill="#84c713" opacity=".72" filter="url(#bl)"/>
<rect x="909" y="7" width="31.4" height="18" rx="3.6" fill="#6c9f8c"/>
<g fill="none" stroke="#e3f0df" stroke-width="1.1" stroke-linecap="round" stroke-linejoin="round"><path d="M913.6 13 V20.2 M915.4 21.6 H922 M923.6 20.2 V13.6 M915.4 11.6 H920"/>
<rect x="912.4" y="10.4" width="2.6" height="2.6"/><rect x="912.4" y="20.2" width="2.6" height="2.6"/><rect x="922.2" y="20.2" width="2.6" height="2.6"/>
<path d="M931.4 15.2 l3 3 l3 -3" stroke-width="1.4"/></g>
<rect x="921" y="8.8" width="4.6" height="4.6" fill="#fbfbe6"/>
<path d="M808 270.6 L875.4 267.2" stroke="#84c713" stroke-width="27" stroke-linecap="round" opacity=".66" filter="url(#bl)"/>
</svg>
<div class="t" style="top:263px;left:805.5px;z-index:5;color:#90ad72;letter-spacing:0.019px">Measurement</div>
</div></body></html>
